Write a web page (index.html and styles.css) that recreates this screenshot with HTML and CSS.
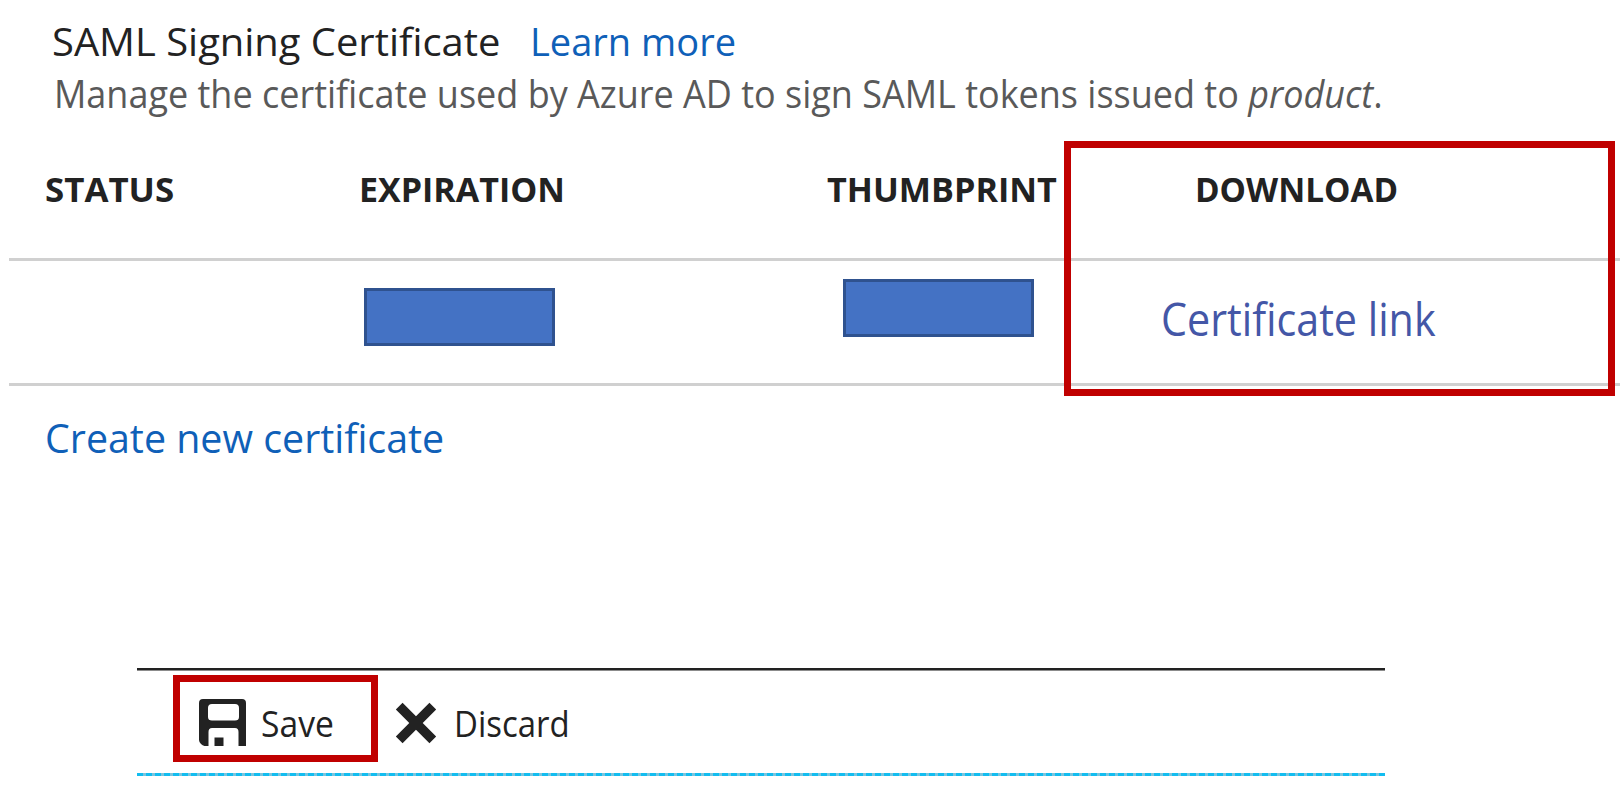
FILE: index.html
```
<!DOCTYPE html>
<html lang="en">
<head>
<meta charset="utf-8">
<title>SAML Signing Certificate</title>
<link rel="stylesheet" href="styles.css">
</head>
<body>
<main class="page">
  <header class="heading">
    <h1 class="title"><span class="fit fit-title">SAML Signing Certificate</span></h1>
    <a class="learn link"><span class="fit fit-learn">Learn more</span></a>
  </header>
  <p class="intro"><span class="fit fit-intro">Manage the certificate used by Azure AD to sign SAML tokens issued to <em>product</em>.</span></p>

  <section class="certificates">
    <div class="row row-head">
      <div class="cell cell-status"><span class="fit fit-status">STATUS</span></div>
      <div class="cell cell-expiration"><span class="fit fit-expiration">EXPIRATION</span></div>
      <div class="cell cell-thumbprint"><span class="fit fit-thumbprint">THUMBPRINT</span></div>
      <div class="cell cell-download"><span class="fit fit-download">DOWNLOAD</span></div>
    </div>
    <div class="row row-data">
      <div class="cell"></div>
      <div class="cell"><div class="mask mask-expiration"></div></div>
      <div class="cell"><div class="mask mask-thumbprint"></div></div>
      <div class="cell"><a class="cert-link"><span class="fit fit-cert">Certificate link</span></a></div>
    </div>
    <div class="callout callout-download"></div>
  </section>

  <a class="create link"><span class="fit fit-create">Create new certificate</span></a>

  <div class="toolbar">
    <div class="tool tool-save">
      <svg class="icon-save" viewBox="0 0 47 47" width="47" height="47">
        <path fill="#222" fill-rule="evenodd" d="M4 0H43Q47 0 47 4V47H39.500V33Q39.500 29 36 29H13Q9.500 29 9.500 33V47H5.500Q3.500 46.500 2 45Q0 43 0 41V4Q0 0 4 0ZM13 5Q9 5 9 9V18Q9 21.500 13 21.500H36Q40 21.500 40 18V9Q40 5 36 5ZM15.500 38.500H24.500V47H15.500Z"/>
      </svg>
      <span class="fit fit-save">Save</span>
    </div>
    <div class="tool tool-discard">
      <svg class="icon-discard" viewBox="0 0 42 42" width="42" height="42">
        <path stroke="#222" stroke-width="9.500" d="M4.200 4.200L37.800 37.800M37.800 4.200L4.200 37.800"/>
      </svg>
      <span class="fit fit-discard">Discard</span>
    </div>
    <div class="callout callout-save"></div>
  </div>
  <div class="dashes"></div>
</main>
</body>
</html>
```
FILE: styles.css
```
* { box-sizing: border-box; }
body {
  margin: 0;
  background: #fff;
  font-family: "Open Sans", "Noto Sans", sans-serif;
  color: #222;
}
.page { width: 1620px; height: 799px; }
.fit { display: inline-block; white-space: nowrap; transform-origin: 0 50%; }
.fit-title { transform: scaleX(1.023); }
.fit-learn { transform: scaleX(.975); }
.fit-intro { transform: scaleX(.947); }
.fit-status { transform: scaleX(1.025); }
.fit-expiration { transform: scaleX(1); }
.fit-thumbprint { transform: scaleX(1.005); }
.fit-download { transform: scaleX(.978); }
.fit-cert { transform: scaleX(.917); }
.fit-create { transform: scaleX(.984); }
.fit-save { transform: scaleX(.935); }
.fit-discard { transform: scaleX(.915); }
.link { color: #0f60b8; }
.heading { display: flex; height: 68px; padding: 13px 0 0 52px; }
.title { margin: 0; width: 478px; font-size: 39px; font-weight: 400; line-height: 56px; }
.learn { font-size: 39px; line-height: 56px; }
.intro {
  margin: 0;
  height: 50px;
  padding-left: 53.5px;
  font-size: 38px;
  line-height: 50px;
  color: #595959;
}
.certificates { position: relative; margin: 40px 0 0 9px; }
.row {
  display: grid;
  grid-template-columns: 350px 460px 280px 1fr;
  border-bottom: 3px solid #d0d0d0;
}
.row-head { height: 103px; font-size: 34px; font-weight: 700; line-height: 62px; }
.cell-status { padding-left: 36px; }
.cell-thumbprint { padding-left: 8px; }
.cell-download { padding-left: 96px; }
.row-data { height: 125px; }
.mask { width: 191px; height: 58px; border: 3px solid #2f528f; background: #4472c4; }
.mask-expiration { margin: 27px 0 0 5px; }
.mask-thumbprint { margin: 18px 0 0 24px; }
.cert-link { display: block; padding-left: 62px; font-size: 45px; line-height: 116px; color: #4457a7; }
.callout { position: absolute; border: 7px solid #c00000; }
.callout-download { left: 1055px; top: -17px; width: 551px; height: 255px; }
.create { display: block; margin: 22px 0 0 45px; height: 60px; font-size: 40px; line-height: 60px; }
.toolbar {
  position: relative;
  display: flex;
  width: 1248px;
  height: 105px;
  margin: 200px 0 0 137px;
  border-top: 2px solid #222;
  box-shadow: inset 0 1px #8c8c8c;
}
.tool { display: flex; font-size: 36px; line-height: 50px; padding-top: 29px; }
.tool-save { padding-left: 62px; width: 258px; }
.tool-save .fit { margin-left: 15px; }
.icon-discard { margin-top: 3px; }
.tool-discard .fit { margin-left: 17px; }
.callout-save { left: 36px; top: 5px; width: 205px; height: 87px; }
.dashes {
  width: 1248px;
  height: 3px;
  margin-left: 137px;
  background: repeating-linear-gradient(90deg, #12bdf0 0 6px, #7cc4dc 6px 9px);
}
```
